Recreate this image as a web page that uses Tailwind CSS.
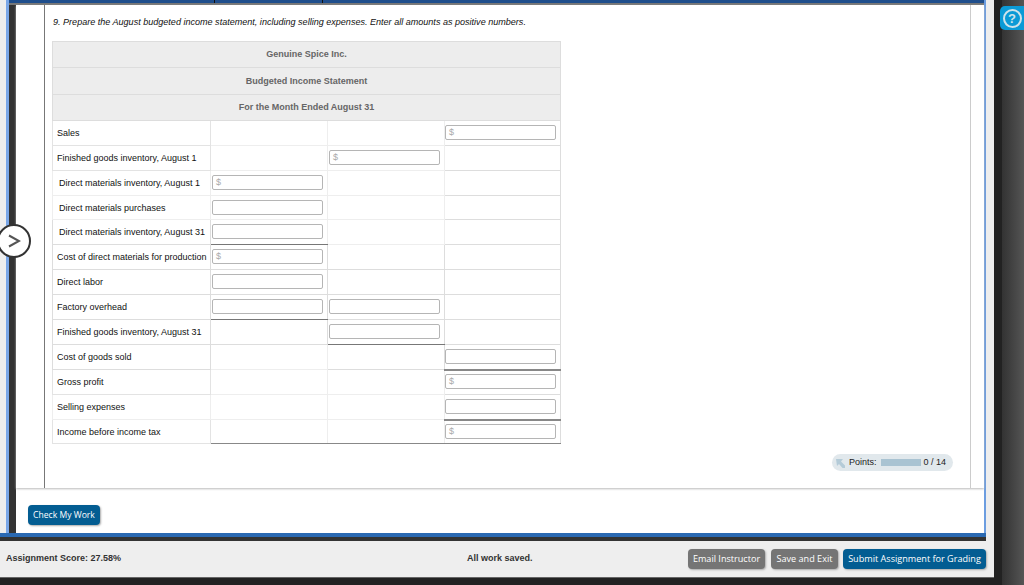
<!DOCTYPE html>
<html lang="en">
<head>
  <meta charset="UTF-8" />
  <title>Assignment</title>
  <script src="https://cdn.jsdelivr.net/npm/@tailwindcss/browser@4"></script>
</head>
<body class="m-0 overflow-hidden bg-[#222] font-['Liberation_Sans',Arial,sans-serif]">
  <div class="relative flex h-[585px] w-[1024px] overflow-hidden">

    <!-- page column -->
    <div class="flex h-[585px] w-[994px] flex-col">
      <div class="flex h-[541px] shrink-0 bg-[#eee]">
        <div class="flex h-[541px] w-[986px] flex-col">
          <div class="ml-[6px] flex h-[533px] shrink-0 flex-col border-l-[3px] border-r-[2px] border-l-[#7aa7e8] border-r-[#6c9de0]">
            <!-- top strip -->
            <div class="flex h-[5px] shrink-0 border-b-2 border-[#777] bg-[#1f4e8c]">
              <div class="ml-[205px] h-[3px] w-px bg-[#111]"></div>
              <div class="ml-[107px] h-[3px] w-px bg-[#111]"></div>
            </div>
            <div class="flex min-h-0 flex-1">
              <div class="w-[7px] shrink-0 bg-[#333]"></div>
              <div class="flex min-w-0 flex-1 flex-col bg-white">
                <!-- question area -->
                <div class="flex h-[483px] shrink-0 shadow-[0_1px_2px_#bbb]">
                  <div class="w-[29px] shrink-0 border-r border-[#777]"></div>
                  <div class="w-[926px] shrink-0 border-r border-[#ccc] pl-[7px] pr-[17px]">
                    <p class="h-[36px] pl-px pt-[12px] text-[9.06px] leading-[11px] text-[#111] italic">9. Prepare the August budgeted income statement, including selling expenses. Enter all amounts as positive numbers.</p>

                    <table class="w-[508px] table-fixed border-collapse text-[9px] leading-[11px] text-[#111] [&_td]:pb-px [&_td:first-child]:pb-0 [&_td:first-child]:pt-px">
                      <colgroup>
                        <col class="w-[158px]" /><col class="w-[117px]" /><col class="w-[117px]" /><col class="w-[116px]" />
                      </colgroup>
                      <thead class="bg-[#ededed] text-[#666]">
                        <tr class="h-[26px]"><th colspan="4" class="border border-[#ddd] text-center font-bold">Genuine Spice Inc.</th></tr>
                        <tr class="h-[27px]"><th colspan="4" class="border border-[#ddd] text-center font-bold">Budgeted Income Statement</th></tr>
                        <tr class="h-[26px]"><th colspan="4" class="border border-[#ddd] text-center font-bold">For the Month Ended August 31</th></tr>
                      </thead>
                      <tbody>
                        <tr class="h-[25px]">
                          <td class="border border-[#e3e3e3] pl-[4px]">Sales</td>
                          <td class="border border-[#eee]"></td>
                          <td class="border border-[#eee]"></td>
                          <td class="border border-[#ddd]"><div class="h-[15px] w-[111px] rounded-[2px] border border-[#b5b5b5] pl-[3px] text-[9px] leading-[13px] text-[#aaa]">$</div></td>
                        </tr>
                        <tr class="h-[25px]">
                          <td class="border border-[#e3e3e3] pl-[4px]">Finished goods inventory, August 1</td>
                          <td class="border border-[#eee]"></td>
                          <td class="border border-[#eee] pl-px"><div class="h-[15px] w-[111px] rounded-[2px] border border-[#b5b5b5] pl-[3px] text-[9px] leading-[13px] text-[#aaa]">$</div></td>
                          <td class="border border-[#ddd]"></td>
                        </tr>
                        <tr class="h-[25px]">
                          <td class="border border-[#eee] pl-[6px]">Direct materials inventory, August 1</td>
                          <td class="border border-[#eee] pl-px"><div class="h-[15px] w-[111px] rounded-[2px] border border-[#b5b5b5] pl-[3px] text-[9px] leading-[13px] text-[#aaa]">$</div></td>
                          <td class="border border-[#eee]"></td>
                          <td class="border border-[#ddd]"></td>
                        </tr>
                        <tr class="h-[24px]">
                          <td class="border border-[#eee] pl-[6px]">Direct materials purchases</td>
                          <td class="border border-[#eee] pl-px"><div class="h-[15px] w-[111px] rounded-[2px] border border-[#b5b5b5]"></div></td>
                          <td class="border border-[#eee]"></td>
                          <td class="border border-[#ddd]"></td>
                        </tr>
                        <tr class="h-[25px]">
                          <td class="border border-[#ddd] pl-[6px]">Direct materials inventory, August 31</td>
                          <td class="border border-[#eee] border-b-[#777] pl-px"><div class="h-[15px] w-[111px] rounded-[2px] border border-[#b5b5b5]"></div></td>
                          <td class="border border-[#eee]"></td>
                          <td class="border border-[#ddd]"></td>
                        </tr>
                        <tr class="h-[25px]">
                          <td class="border border-[#ddd] pl-[4px] whitespace-nowrap">Cost of direct materials for production</td>
                          <td class="border border-[#ddd] border-t-[#777] pl-px"><div class="h-[15px] w-[111px] rounded-[2px] border border-[#b5b5b5] pl-[3px] text-[9px] leading-[13px] text-[#aaa]">$</div></td>
                          <td class="border border-[#ddd]"></td>
                          <td class="border border-[#ddd]"></td>
                        </tr>
                        <tr class="h-[25px]">
                          <td class="border border-[#ddd] pl-[4px]">Direct labor</td>
                          <td class="border border-[#ddd] pl-px"><div class="h-[15px] w-[111px] rounded-[2px] border border-[#b5b5b5]"></div></td>
                          <td class="border border-[#ddd]"></td>
                          <td class="border border-[#ddd]"></td>
                        </tr>
                        <tr class="h-[25px]">
                          <td class="border border-[#ddd] pl-[4px]">Factory overhead</td>
                          <td class="border border-[#ddd] border-b-[#777] pl-px"><div class="h-[15px] w-[111px] rounded-[2px] border border-[#b5b5b5]"></div></td>
                          <td class="border border-[#ddd] pl-px"><div class="h-[15px] w-[111px] rounded-[2px] border border-[#b5b5b5]"></div></td>
                          <td class="border border-[#ddd]"></td>
                        </tr>
                        <tr class="h-[25px]">
                          <td class="border border-[#ddd] pl-[4px]">Finished goods inventory, August 31</td>
                          <td class="border border-[#ddd] border-t-[#777]"></td>
                          <td class="border border-[#ddd] border-b-[#777] pl-px"><div class="h-[15px] w-[111px] rounded-[2px] border border-[#b5b5b5]"></div></td>
                          <td class="border border-[#ddd]"></td>
                        </tr>
                        <tr class="h-[25px]">
                          <td class="border border-[#ddd] pl-[4px]">Cost of goods sold</td>
                          <td class="border border-[#eee]"></td>
                          <td class="border border-[#ddd] border-t-[#777]"></td>
                          <td class="border-x border-[#ddd] border-b-2 border-b-[#888]"><div class="h-[15px] w-[111px] rounded-[2px] border border-[#b5b5b5]"></div></td>
                        </tr>
                        <tr class="h-[25px]">
                          <td class="border border-[#e3e3e3] pl-[4px]">Gross profit</td>
                          <td class="border border-[#eee]"></td>
                          <td class="border border-[#eee]"></td>
                          <td class="border-x border-[#ddd]"><div class="h-[15px] w-[111px] rounded-[2px] border border-[#b5b5b5] pl-[3px] text-[9px] leading-[13px] text-[#aaa]">$</div></td>
                        </tr>
                        <tr class="h-[25px]">
                          <td class="border border-[#eee] pl-[4px]">Selling expenses</td>
                          <td class="border border-[#eee]"></td>
                          <td class="border border-[#eee]"></td>
                          <td class="border-x border-t border-[#ddd] border-b-2 border-b-[#888]"><div class="h-[15px] w-[111px] rounded-[2px] border border-[#b5b5b5]"></div></td>
                        </tr>
                        <tr class="h-[24px]">
                          <td class="border border-[#e3e3e3] pl-[4px]">Income before income tax</td>
                          <td class="border border-[#eee] border-b-[#888]"></td>
                          <td class="border border-[#eee] border-b-[#888]"></td>
                          <td class="border border-[#ddd] border-b-[#888]"><div class="h-[15px] w-[111px] rounded-[2px] border border-[#b5b5b5] pl-[3px] text-[9px] leading-[13px] text-[#aaa]">$</div></td>
                        </tr>
                      </tbody>
                    </table>

                    <div class="mt-[10px] flex justify-end">
                      <div class="flex h-[17px] w-[121px] items-center rounded-[9px] bg-[#e1e8ec] pl-[4px] text-[9px] text-[#222]">
                        <svg class="mr-[3px] h-[10px] w-[10px] shrink-0" viewBox="0 0 10 10"><path d="M0 1h7L5 3.500l4 4V10H6.500l-3.500-4L1 8z" fill="#b4cbd8"/></svg>
                        <span>Points:</span>
                        <span class="ml-[4px] h-[7px] w-[40px] bg-[#a9c3d2]"></span>
                        <span class="ml-[3px]">0 / 14</span>
                      </div>
                    </div>
                  </div>
                </div>
                <!-- check my work -->
                <div class="flex-1 pl-[12px] pt-[17px]">
                  <button class="block h-[20px] w-[72px] rounded-[4px] bg-[#035d92] font-['Open_Sans',sans-serif] text-[8.6px] text-white shadow-[1px_1px_2px_#aaa]">Check My Work</button>
                </div>
              </div>
            </div>
          </div>
          <div class="h-[4px] shrink-0 bg-[#2a69b2]"></div>
          <div class="h-[4px] shrink-0 bg-[#333]"></div>
        </div>
      </div>

      <!-- footer -->
      <div class="flex h-[37px] shrink-0 items-center border-b border-[#666] bg-[#eee] pl-[6px] text-[9px] font-bold text-[#333]">
        <span class="w-[461px]">Assignment Score: 27.58%</span>
        <span class="w-[221px]">All work saved.</span>
        <div class="flex font-['Open_Sans',sans-serif] text-[9.1px] font-normal text-white">
          <button class="h-[20px] w-[77px] rounded-[4px] bg-[#757575] shadow-[1px_1px_2px_#aaa]">Email Instructor</button>
          <button class="ml-[6px] h-[20px] w-[67px] rounded-[4px] bg-[#757575] shadow-[1px_1px_2px_#aaa]">Save and Exit</button>
          <button class="ml-[5px] h-[20px] w-[143px] rounded-[4px] bg-[#035d92] shadow-[1px_1px_2px_#aaa]">Submit Assignment for Grading</button>
        </div>
      </div>
    </div>

    <!-- right dark strip -->
    <div class="w-[8px] bg-[#222]"></div>
    <div class="flex-1 bg-gradient-to-r from-[#333] to-[#555]"></div>

    <!-- side toggle, overlaps page edge -->
    <div class="absolute left-[-3px] top-[224px] flex h-[34px] w-[34px] items-center justify-center rounded-full border-2 border-[#333] bg-white">
      <svg class="h-[16px] w-[14px]" viewBox="0 0 14 16"><path d="M2 2.500l10 5.500-10 5.500" fill="none" stroke="#555" stroke-width="2"/></svg>
    </div>

    <!-- help button -->
    <div class="absolute left-[1000px] top-[6px] flex h-[24px] w-[24px] items-center justify-center rounded-l-[5px] bg-[#0b9ad6]">
      <div class="flex h-[19px] w-[19px] items-center justify-center rounded-full border-2 border-[#cfe3ea] text-[13px] leading-none font-bold text-[#cfe3ea]">?</div>
    </div>
  </div>
</body>
</html>
